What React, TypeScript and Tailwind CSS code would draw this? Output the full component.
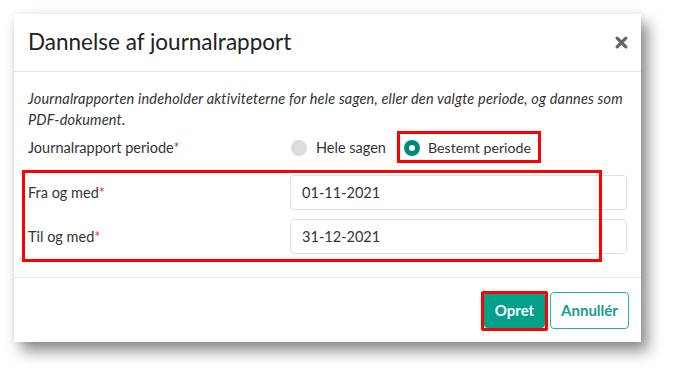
import React from "react";

export default function App() {
  return (
    <div className="w-[677px] h-[378px] bg-white pl-[14px] pt-[14px] overflow-hidden" style={{ fontFamily: "Lato, 'Open Sans', sans-serif" }}>
      <div className="relative w-[627px] h-[328px] bg-white flex flex-col shadow-[7px_9px_14px_rgba(0,0,0,0.45),0_0_6px_rgba(0,0,0,0.08)] text-[#333]">
        {/* Header */}
        <div className="h-[58px] shrink-0 flex items-center justify-between pl-[14px] pr-[14px] border-b border-[#e6e8eb]">
          <h1 className="text-[22.5px] text-[#222] leading-none">Dannelse af journalrapport</h1>
          <svg width="13" height="13" viewBox="0 0 12 12" className="mr-[-1px]">
            <path d="M2 2 L10 10 M10 2 L2 10" stroke="#666" strokeWidth="3" strokeLinecap="round" />
          </svg>
        </div>
        {/* Body */}
        <div className="h-[206px] shrink-0 px-[14px] pt-[16px] flex flex-col border-b border-[#e6e8eb]">
          <p className="w-[604px] italic text-[14.5px] tracking-[0.18px] leading-[21px] text-[#333]">
            Journalrapporten indeholder aktiviteterne for hele sagen, eller den valgte periode, og dannes som PDF-dokument.
          </p>
          <div className="flex items-center mt-[7px] h-[22px]">
            <div className="w-[263px] text-[14.5px]">
              Journalrapport periode<span className="text-[#e0323c]">*</span>
            </div>
            <label className="flex items-center gap-[9px] text-[14.5px]">
              <span className="w-[16px] h-[16px] rounded-full bg-[#dcdcdc]" />
              Hele sagen
            </label>
            <label className="flex items-center gap-[8px] text-[14.2px] ml-[18px]">
              <span className="w-[16px] h-[16px] rounded-full bg-[#00897b] flex items-center justify-center">
                <span className="w-[6px] h-[6px] rounded-full bg-white" />
              </span>
              Bestemt periode
            </label>
          </div>
          <div className="flex items-center mt-[16px]">
            <div className="w-[263px] text-[14.5px]">
              Fra og med<span className="text-[#e0323c]">*</span>
            </div>
            <div className="w-[338px] h-[35px] border border-[#dde1e6] rounded-[4px] flex items-center px-[11px] text-[14.5px]">01-11-2021</div>
          </div>
          <div className="flex items-center mt-[9px]">
            <div className="w-[263px] text-[14.5px]">
              Til og med<span className="text-[#e0323c]">*</span>
            </div>
            <div className="w-[338px] h-[35px] border border-[#dde1e6] rounded-[4px] flex items-center px-[11px] text-[14.5px]">31-12-2021</div>
          </div>
        </div>
        {/* Footer */}
        <div className="flex-1 flex items-center justify-end gap-[5px] pr-[12px]">
          <button className="w-[61px] h-[36px] rounded-[4px] bg-[#00a08a] text-white text-[15px] font-bold">Opret</button>
          <button className="w-[79px] h-[37px] rounded-[4px] border border-[#1fb5a0] text-[#12a08c] text-[15px] font-bold bg-white">Annullér</button>
        </div>

        {/* Annotation boxes */}
        <div className="absolute left-[383px] top-[117px] w-[144px] h-[32px] border-[3px] border-[#ff0000]" />
        <div className="absolute left-[8px] top-[156px] w-[580px] h-[92px] border-[3px] border-[#ff0000]" />
        <div className="absolute left-[467px] top-[277px] w-[67px] h-[40px] border-[3px] border-[#ff0000] rounded-[2px]" />
      </div>
    </div>
  );
}
